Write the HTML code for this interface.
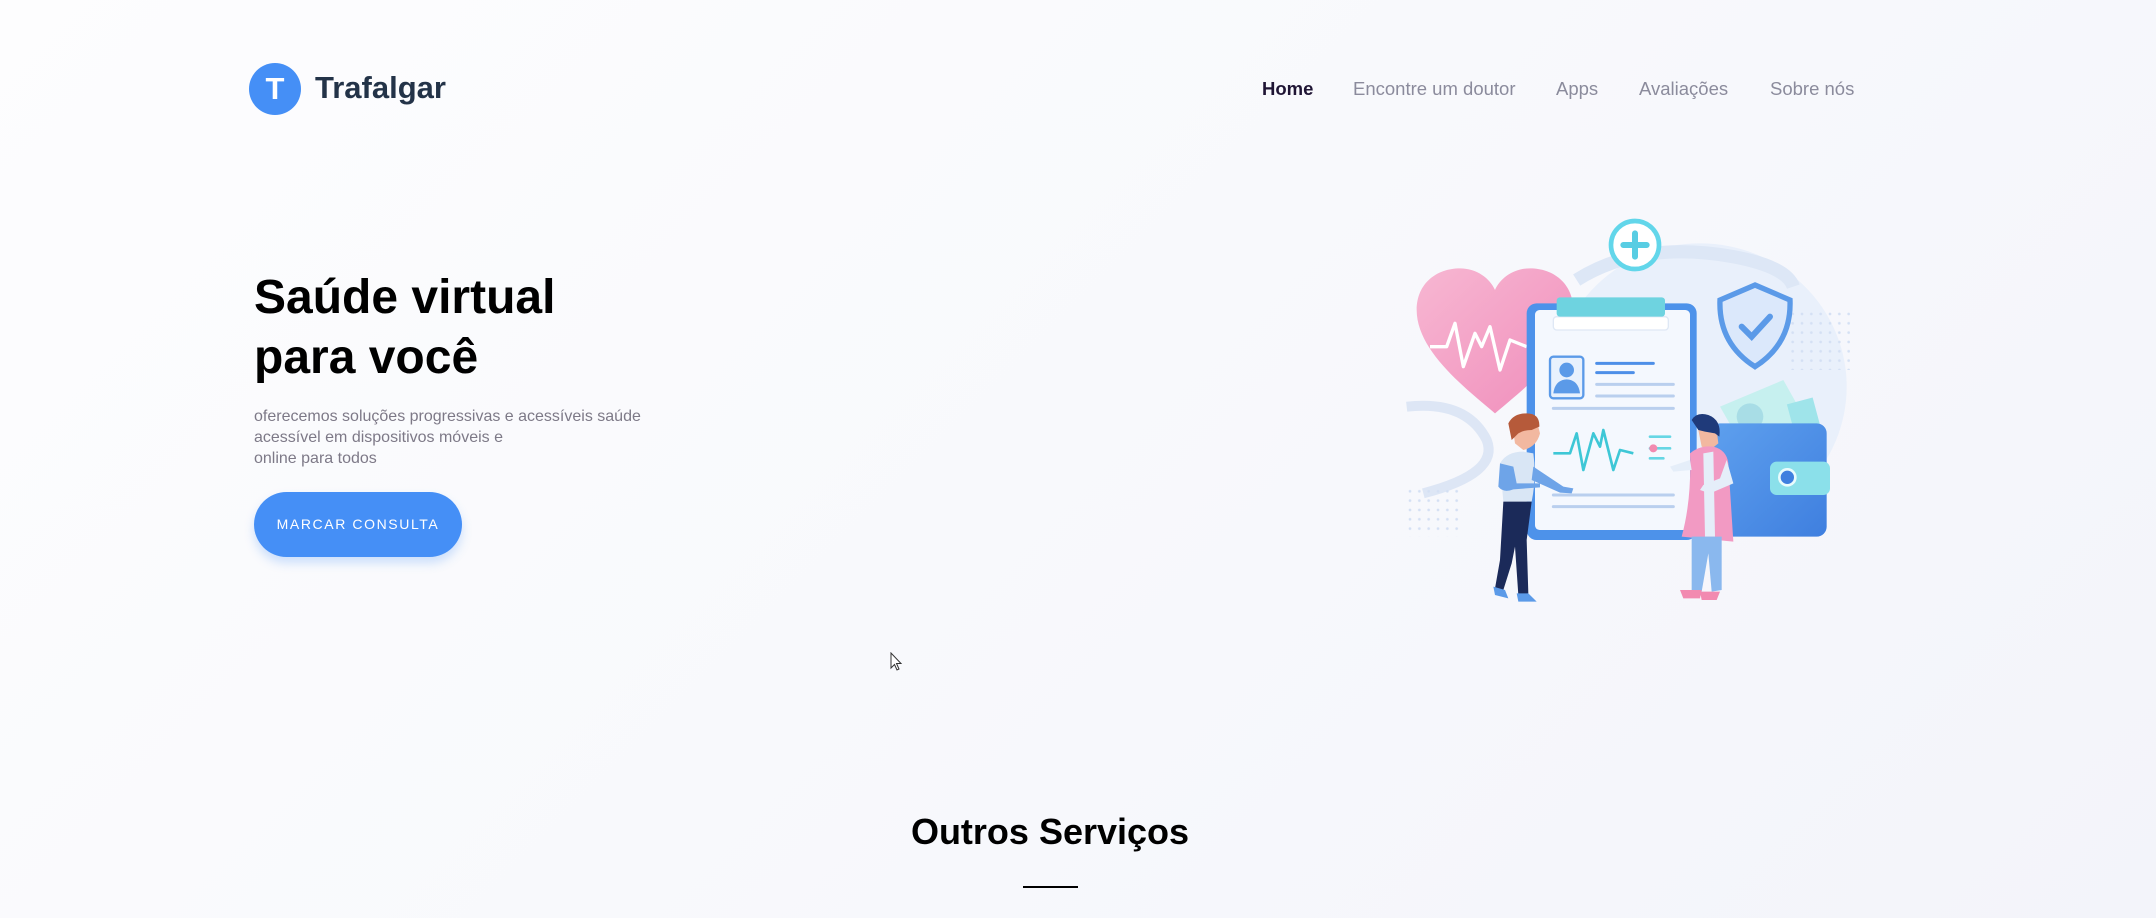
<!DOCTYPE html>
<html><head><meta charset="utf-8"><style>
*{margin:0;padding:0;box-sizing:border-box}
body{width:2156px;height:918px;overflow:hidden;background:linear-gradient(135deg,#fdfdfe 0%,#f7f8fc 60%,#f3f4fa 100%);font-family:"Liberation Sans",sans-serif;position:relative}
.a{position:absolute;white-space:nowrap}
.logo{left:249px;top:63px;width:52px;height:52px;border-radius:50%;background:#458ff6;color:#fff;font-size:31px;font-weight:bold;text-align:center;line-height:52px}
.brand{left:315px;top:70px;font-size:31px;font-weight:bold;color:#233348}
.nav{top:78px;font-size:18.5px;color:#8b8b9c}
h1{position:absolute;left:254px;top:268px;font-size:48px;line-height:60px;color:#000;font-weight:bold}
.p{left:254px;top:406px;font-size:16px;line-height:21px;color:#7d7987}
.btn{left:254px;top:492px;width:208px;height:65px;border-radius:33px;background:#458ff6;color:#fff;font-size:14px;letter-spacing:1.6px;text-align:center;line-height:65px;box-shadow:0 6px 10px rgba(69,143,246,.25)}
.h2{left:0;width:2100px;text-align:center;top:811px;font-size:36px;font-weight:bold;color:#000}
.ul{left:1023px;top:886px;width:55px;height:2px;background:#000}
</style></head><body>
<div class="a logo">T</div>
<div class="a brand">Trafalgar</div>
<div class="a nav" style="left:1262px;color:#1f1534;font-weight:bold">Home</div>
<div class="a nav" style="left:1353px">Encontre um doutor</div>
<div class="a nav" style="left:1556px">Apps</div>
<div class="a nav" style="left:1639px">Avaliações</div>
<div class="a nav" style="left:1770px">Sobre nós</div>
<h1>Saúde virtual<br>para você</h1>
<div class="a p">oferecemos soluções progressivas e acessíveis saúde<br>acessível em dispositivos móveis e<br>online para todos</div>
<div class="a btn">MARCAR CONSULTA</div>
<div class="a h2">Outros Serviços</div>
<div class="a ul"></div>
<svg class="a" style="left:890px;top:652px" width="14" height="20" viewBox="0 0 14 20"><path d="M1 1 L1 16 L4.5 12.5 L7 18 L9 17 L6.5 11.5 L11 11.5 Z" fill="#fff" stroke="#333" stroke-width="1"/></svg>
<svg class="a" style="left:1380px;top:200px" width="480" height="420" viewBox="0 0 1440 1260">
<defs>
<linearGradient id="hg" x1="0" y1="0" x2="1" y2="1"><stop offset="0" stop-color="#f7b7d2"/><stop offset="1" stop-color="#f08dbb"/></linearGradient>
<linearGradient id="wg" x1="0" y1="0" x2="1" y2="1"><stop offset="0" stop-color="#5ea0ee"/><stop offset="1" stop-color="#3f7fdf"/></linearGradient>
<pattern id="dots" width="28" height="28" patternUnits="userSpaceOnUse"><circle cx="6" cy="6" r="4" fill="#d4e0f4"/></pattern>
</defs>
<ellipse cx="960" cy="560" rx="440" ry="430" fill="#e9f0fb"/>
<path d="M590 240 Q780 120 1060 170 Q1220 200 1240 260" fill="none" stroke="#dde7f6" stroke-width="40"/>
<path d="M80 620 Q260 600 320 720 Q360 820 130 880" fill="none" stroke="#dde6f5" stroke-width="30"/>
<rect x="80" y="860" width="170" height="150" fill="url(#dots)"/>
<rect x="1220" y="330" width="190" height="180" fill="url(#dots)"/>
<circle cx="765" cy="135" r="72" fill="#fff" stroke="#62d6ea" stroke-width="14"/>
<path d="M765 100v70M730 135h70" stroke="#58cde3" stroke-width="18" stroke-linecap="round"/>
<path d="M345 640 C250 560 110 450 110 330 C110 250 170 205 240 205 C290 205 330 235 345 270 C360 235 400 205 450 205 C520 205 580 250 580 330 C580 450 440 560 345 640Z" fill="url(#hg)"/>
<path d="M150 440 H200 L225 370 L250 500 L285 400 L305 440 L330 380 L360 510 L390 420 L440 440" fill="none" stroke="#fff" stroke-width="10" stroke-linejoin="round"/>
<path d="M1125 255 L1230 300 Q1235 430 1125 500 Q1015 430 1020 300Z" fill="#dbe8fb" stroke="#5b9ae8" stroke-width="16"/>
<path d="M1085 380 L1115 410 L1170 350" fill="none" stroke="#5b9ae8" stroke-width="18" stroke-linecap="round"/>
<path d="M1020 620 L1210 540 L1300 700 L1100 760Z" fill="#c6f0ef"/>
<rect x="1240" y="600" width="80" height="150" fill="#9fe4ea" transform="rotate(-15 1280 680)"/>
<circle cx="1110" cy="650" r="40" fill="#a8dde6"/>
<rect x="990" y="670" width="350" height="340" rx="30" fill="url(#wg)"/>
<rect x="1170" y="785" width="180" height="100" rx="20" fill="#8be0ea"/>
<circle cx="1222" cy="832" r="24" fill="#3f7fdf" stroke="#e9fbfd" stroke-width="8"/>
<rect x="440" y="310" width="510" height="710" rx="30" fill="#4d92ea"/>
<rect x="465" y="330" width="465" height="660" rx="14" fill="#f4f8fe"/>
<rect x="520" y="350" width="345" height="40" rx="10" fill="#fff" stroke="#dfe8f5" stroke-width="4"/>
<rect x="530" y="292" width="325" height="58" rx="10" fill="#6ed3e0"/>
<rect x="510" y="470" width="100" height="125" rx="10" fill="#e8f1fd" stroke="#5b9ae8" stroke-width="7"/>
<circle cx="560" cy="510" r="22" fill="#5b9ae8"/>
<path d="M520 580 Q525 540 560 538 Q595 540 600 580Z" fill="#5b9ae8"/>
<path d="M650 490h170M650 518h110" stroke="#4d8fe8" stroke-width="9" stroke-linecap="round"/>
<path d="M650 553h230M650 588h230M520 625h360M520 885h360M520 920h360" stroke="#b9cfee" stroke-width="9" stroke-linecap="round"/>
<path d="M520 760 H570 L590 700 L610 810 L640 700 L660 740 L670 690 L700 810 L720 750 L760 760" fill="none" stroke="#3ec7d6" stroke-width="8" stroke-linejoin="round"/>
<path d="M810 710h60M810 745h60M810 775h40" stroke="#66d6e4" stroke-width="8" stroke-linecap="round"/>
<circle cx="820" cy="745" r="12" fill="#f28ab0"/>
<path d="M395 660 Q420 640 470 660 L480 700 Q470 740 430 750 L405 730Z" fill="#f2b8a0"/>
<path d="M385 670 Q400 640 440 640 Q480 640 478 680 L455 690 Q430 690 415 700 L395 720 Z" fill="#b65a3a"/>
<path d="M360 790 Q380 755 430 755 L460 760 Q470 830 455 905 L370 905Z" fill="#d9e6f5"/>
<path d="M360 790 L355 860 Q370 880 400 868 L480 862 L480 850 L410 850 L400 800Z" fill="#6ea4e8"/>
<path d="M460 800 L550 860 L580 865 L575 880 L540 878 L455 840Z" fill="#6ea4e8"/>
<path d="M370 905 L455 905 L440 1020 L445 1180 L415 1185 L405 1040 L395 1090 L370 1170 L345 1165 L360 1080Z" fill="#1b2a59"/>
<path d="M340 1160 L375 1170 L385 1195 L345 1185Z M410 1180 L445 1180 L470 1205 L415 1205Z" fill="#5b9ae8"/>
<path d="M955 690 Q980 670 1010 690 L1015 730 L990 750 L965 740Z" fill="#f2b8a0"/>
<path d="M935 660 Q950 635 985 645 Q1025 660 1018 710 L1005 700 L975 695 L955 690 Z" fill="#1f3a7a"/>
<path d="M930 760 Q960 735 1000 740 Q1040 750 1045 790 L1060 1025 L905 1010 Q935 900 930 760Z" fill="#f29ac3"/>
<path d="M970 760 L1000 755 L1005 1010 L975 1010Z" fill="#e5eef9"/>
<path d="M1040 780 L1060 850 L990 880 L960 870 L970 855 L1020 835Z" fill="#e5eef9"/>
<path d="M930 780 L870 800 L880 815 L935 810Z" fill="#e5eef9"/>
<path d="M935 1010 L1025 1010 L1025 1170 L995 1175 L985 1060 L965 1175 L935 1170Z" fill="#8ab8ee"/>
<path d="M900 1170 L965 1170 L960 1195 L910 1195Z M960 1175 L1020 1175 L1010 1200 L965 1200Z" fill="#f28ab0"/>
</svg>
</body></html>
